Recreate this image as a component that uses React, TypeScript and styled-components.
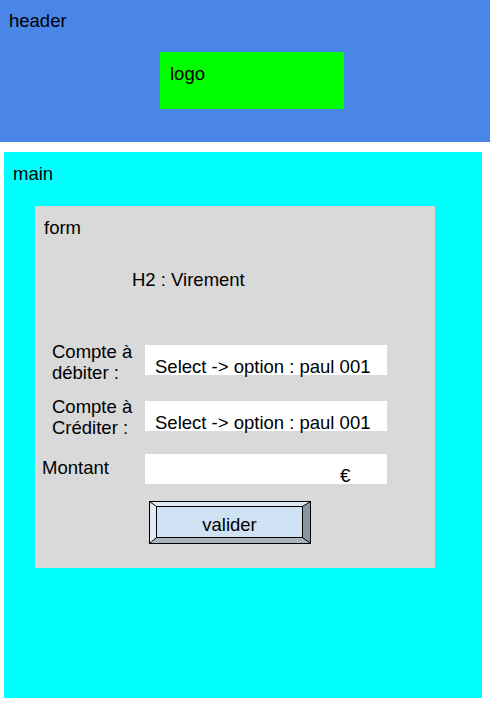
import React from 'react';
import styled, { createGlobalStyle } from 'styled-components';

const GlobalStyle = createGlobalStyle`
  body {
    margin: 0;
    background: #ffffff;
    font-family: "Liberation Sans", Arial, sans-serif;
    font-size: 18.5px;
    line-height: 21px;
    color: #000;
  }
`;

const Header = styled.header`
  height: 142px;
  box-sizing: border-box;
  padding: 10px 9px 0;
  background: #4a86e8;
  display: flex;
  flex-direction: column;
  align-items: flex-start;
`;

const Logo = styled.div`
  width: 184px;
  height: 57px;
  box-sizing: border-box;
  margin: 21px 0 0 151px;
  padding: 11px 10px 0;
  background: #00ff00;
`;

const Main = styled.main`
  width: 478px;
  height: 546px;
  box-sizing: border-box;
  margin: 10px 0 0 4px;
  padding: 11px 0 0 9px;
  background: #00ffff;
  display: flex;
  flex-direction: column;
  align-items: flex-start;
`;

const Form = styled.form`
  width: 400px;
  height: 362px;
  box-sizing: border-box;
  margin: 22px 0 0 22px;
  padding-top: 11px;
  background: #d9d9d9;
  display: flex;
  flex-direction: column;
  align-items: flex-start;
`;

const FormTag = styled.div`
  margin-left: 9px;
`;

const Title = styled.h2`
  margin: 31px 0 0 97px;
  font-size: inherit;
  line-height: inherit;
  font-weight: normal;
`;

const Row = styled.div<{ $top: number }>`
  display: flex;
  align-items: flex-start;
  margin-top: ${(p) => p.$top}px;
`;

const Label = styled.label<{ $indent: number; $drop: number }>`
  width: 110px;
  box-sizing: border-box;
  padding-left: ${(p) => p.$indent}px;
  margin-top: ${(p) => p.$drop}px;
`;

const Field = styled.div<{ $lift: number; $textLeft?: number }>`
  width: 242px;
  height: 30px;
  box-sizing: border-box;
  margin-top: ${(p) => p.$lift}px;
  padding: 13px 0 0 ${(p) => p.$textLeft ?? 10}px;
  line-height: 17px;
  background: #ffffff;
  white-space: nowrap;
`;

const Submit = styled.button`
  position: relative;
  width: 160px;
  height: 41px;
  box-sizing: border-box;
  margin: 18px 0 0 115px;
  padding: 0;
  border-style: solid;
  border-width: 4px 7px 5px 6px;
  border-color: #dfe9f4 #8995a2 #a9b4c0 #e3ecf6;
  outline: 1px solid #000;
  background: #cfe2f3;
  font: inherit;
  color: #000;
`;

const Face = styled.span`
  display: flex;
  align-items: center;
  justify-content: center;
  height: 100%;
  box-sizing: border-box;
  padding-top: 4px;
  border: 1px solid #000;
`;

const Corners = styled.svg`
  position: absolute;
  top: -4px;
  left: -6px;
  width: 160px;
  height: 41px;
  pointer-events: none;
`;

const App: React.FC = () => {
  return (
    <>
      <GlobalStyle />
      <Header>
        <div>header</div>
        <Logo>logo</Logo>
      </Header>

      <Main>
        <div>main</div>
        <Form onSubmit={(e) => e.preventDefault()}>
          <FormTag>form</FormTag>
          <Title>H2 : Virement</Title>

          <Row $top={51}>
            <Label $indent={17} $drop={0}>
              Compte à
              <br />
              débiter :
            </Label>
            <Field $lift={4}>Select -&gt; option : paul 001</Field>
          </Row>

          <Row $top={13}>
            <Label $indent={17} $drop={0}>
              Compte à
              <br />
              Créditer :
            </Label>
            <Field $lift={5}>Select -&gt; option : paul 001</Field>
          </Row>

          <Row $top={16}>
            <Label $indent={7} $drop={3}>
              Montant
            </Label>
            <Field $lift={0} $textLeft={195}>€</Field>
          </Row>

          <Submit type="submit">
            <Corners viewBox="0 0 160 41">
              <g stroke="#000" strokeWidth="1">
                <line x1="0" y1="0" x2="6" y2="4" />
                <line x1="160" y1="0" x2="153" y2="4" />
                <line x1="0" y1="41" x2="6" y2="36" />
                <line x1="160" y1="41" x2="153" y2="36" />
              </g>
            </Corners>
            <Face>valider</Face>
          </Submit>
        </Form>
      </Main>
    </>
  );
};

export default App;
